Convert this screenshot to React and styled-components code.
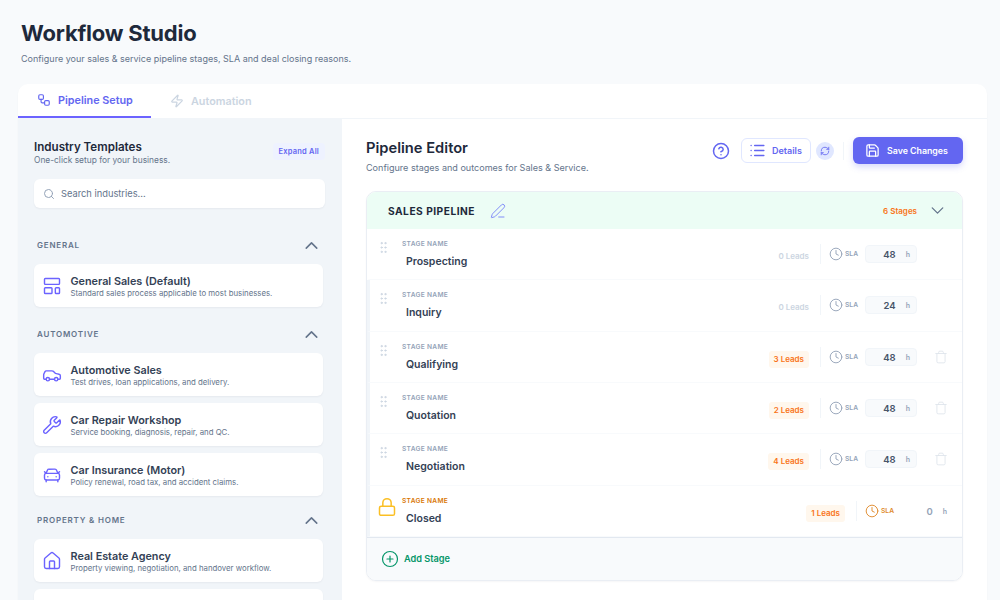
import React from "react"
import styled, { createGlobalStyle } from "styled-components"
import {
  Workflow, Zap, Search, ChevronUp, ChevronDown, LayoutTemplate, Car, Wrench, CarFront, House,
  CircleHelp, List, RefreshCw, Save, PenLine, GripVertical, Clock, Trash, Lock, CirclePlus,
} from "lucide-react"

const GlobalStyle = createGlobalStyle`
  html, body { margin: 0; height: 600px; overflow: hidden; background: #f8fafc; }
  body { font-family: Inter, "Liberation Sans", sans-serif; color: #1e293b; }
  * { box-sizing: border-box; }
`

const Page = styled.div`
  height: 600px;
  overflow: hidden;
  padding: 20px 13px 0 18px;
`
const PageHead = styled.header`
  padding-left: 3px;
  height: 64px;
`
const PageTitle = styled.h1`
  margin: 0;
  font-size: 22px;
  line-height: 26px;
  font-weight: 700;
  letter-spacing: -0.2px;
  color: #1e293b;
`
const PageSub = styled.p`
  margin: 6px 0 0;
  font-size: 9px;
  line-height: 14px;
  color: #64748b;
`
const Card = styled.main`
  background: #fff;
  border-radius: 10px 10px 0 0;
  height: 560px;
  display: flex;
  flex-direction: column;
  box-shadow: 0 1px 2px rgba(15, 23, 42, 0.03);
`
const Tabs = styled.nav`
  display: flex;
  height: 35px;
  flex: none;
  border-bottom: 1px solid #f1f5f9;
`
const Tab = styled.div`
  width: ${p => p.$w}px;
  display: flex;
  align-items: center;
  gap: 7px;
  padding-left: 19px;
  font-size: 10.8px;
  font-weight: 600;
  color: ${p => (p.$active ? "#6366f1" : "#cbd5e1")};
  border-bottom: ${p => (p.$active ? "2px solid #6c63ff" : "none")};
`
const Body = styled.div`
  flex: 1;
  display: flex;
  min-height: 0;
`
const Side = styled.aside`
  width: 324px;
  flex: none;
  background: #f1f5f9;
  padding: 21px 17px 0 16px;
  overflow: hidden;
`
const SideHead = styled.div`
  display: flex;
  justify-content: space-between;
  align-items: flex-start;
`
const SideTitle = styled.h2`
  margin: 0;
  font-size: 11.6px;
  line-height: 14px;
  font-weight: 600;
  color: #1e293b;
`
const SideSub = styled.p`
  margin: 0;
  font-size: 8.4px;
  line-height: 12px;
  color: #64748b;
`
const Expand = styled.span`
  margin-top: 3px;
  background: #eef2ff;
  color: #6366f1;
  font-size: 7.5px;
  font-weight: 600;
  letter-spacing: 0.2px;
  padding: 4px 6px;
  border-radius: 4px;
  line-height: 9px;
`
const SearchBox = styled.div`
  margin-top: 13px;
  height: 29px;
  background: #fff;
  border-radius: 6px;
  display: flex;
  align-items: center;
  gap: 6px;
  padding-left: 9px;
  font-size: 9.3px;
  color: #64748b;
  box-shadow: 0 1px 2px rgba(15, 23, 42, 0.05);
`
const Group = styled.section`
  margin-top: ${p => p.$gap}px;
  padding-right: 2.5px;
`
const GroupHead = styled.div`
  display: flex;
  justify-content: space-between;
  align-items: center;
  height: 14px;
  padding: 0 1px 0 3px;
  margin-bottom: 12px;
  font-size: 8px;
  font-weight: 600;
  letter-spacing: 0.8px;
  color: #64748b;
`
const TemplateList = styled.div`
  display: flex;
  flex-direction: column;
  gap: 7px;
`
const Template = styled.div`
  height: 43px;
  background: #fff;
  border-radius: 6px;
  display: flex;
  align-items: center;
  gap: 8.5px;
  padding-left: 8px;
  box-shadow: 0 1px 2px rgba(15, 23, 42, 0.05);
  color: #6c63ff;
`
const TemplateText = styled.div`
  padding-top: 2px;
`
const TemplateName = styled.div`
  font-size: 10.8px;
  line-height: 13px;
  font-weight: 600;
  color: #334155;
`
const TemplateDesc = styled.div`
  font-size: 7.8px;
  line-height: 11px;
  color: #64748b;
`
const Editor = styled.div`
  flex: 1;
  padding: 18px 24px 0 24px;
`
const EditorHead = styled.div`
  display: flex;
  justify-content: space-between;
  align-items: flex-start;
  height: 54px;
`
const EditorTitle = styled.h2`
  margin: 0;
  font-size: 14.7px;
  line-height: 22px;
  font-weight: 600;
  color: #1e293b;
`
const EditorSub = styled.p`
  margin: 2px 0 0;
  font-size: 9.05px;
  line-height: 14px;
  color: #64748b;
`
const Actions = styled.div`
  display: flex;
  align-items: center;
  height: 27px;
  color: #6366f1;
`
const DetailsBtn = styled.div`
  margin-left: 11px;
  width: 70px;
  height: 25px;
  display: flex;
  align-items: center;
  gap: 6px;
  padding-left: 7px;
  border: 1px solid #e0e7ff;
  border-radius: 6px;
  font-size: 9px;
  font-weight: 600;
  color: #6366f1;
`
const RoundBtn = styled.div`
  margin-left: 5px;
  width: 18px;
  height: 18px;
  border-radius: 50%;
  background: #e0e7ff;
  display: flex;
  align-items: center;
  justify-content: center;
`
const VRule = styled.div`
  width: 1px;
  height: 18px;
  background: #f1f5f9;
  margin: 0 9px;
`
const SaveBtn = styled.div`
  width: 110px;
  height: 27px;
  background: #6366f1;
  border-radius: 6px;
  color: #fff;
  display: flex;
  align-items: center;
  gap: 7px;
  padding-left: 12px;
  font-size: 8.8px;
  font-weight: 600;
  box-shadow: 0 3px 6px rgba(99, 102, 241, 0.25);
`
const Pipeline = styled.section`
  border: 1px solid #eaeef4;
  border-radius: 10px;
  overflow: hidden;
  box-shadow: 0 1px 2px rgba(15, 23, 42, 0.04);
`
const PipelineHead = styled.div`
  height: 37px;
  background: #ecfdf5;
  display: flex;
  align-items: center;
  padding: 0 14px 0 21px;
`
const PipelineName = styled.span`
  font-size: 10.2px;
  font-weight: 700;
  letter-spacing: 0.5px;
  color: #1e293b;
  margin-right: 15px;
`
const StageCount = styled.span`
  margin-left: auto;
  margin-right: 10px;
  font-size: 8px;
  font-weight: 600;
  color: #f97316;
`
const Stage = styled.div`
  height: ${p => p.$h}px;
  display: flex;
  align-items: flex-start;
  border-bottom: 1px solid #f8fafc;
  border-left: ${p => (p.$edge ? "3px solid #f1f5f9" : "3px solid transparent")};
  padding-right: ${p => (p.$locked ? 9 : 14)}px;
`
const Handle = styled.div`
  width: 32px;
  flex: none;
  padding: 10px 0 0 6px;
  color: #cbd5e1;
`
const LockSlot = styled.div`
  width: 32px;
  flex: none;
  padding: 11px 0 0 6.5px;
  color: #fbbf24;
`
const StageText = styled.div`
  flex: 1;
  padding-top: 11px;
`
const FieldLabel = styled.div`
  font-size: 6.6px;
  line-height: 8px;
  font-weight: 600;
  letter-spacing: 0.3px;
  color: ${p => (p.$locked ? "#d97706" : "#94a3b8")};
`
const StageName = styled.div`
  margin: 7px 0 0 4px;
  font-size: 10.5px;
  line-height: 14px;
  font-weight: 600;
  color: #334155;
`
const StageRight = styled.div`
  display: flex;
  align-items: center;
  height: 18px;
  margin-top: 16px;
`
const Leads = styled.span`
  font-size: 8px;
  font-weight: 600;
  line-height: 10px;
  border-radius: 3px;
  margin-top: 4px;
  color: ${p => (p.$hot ? "#f97316" : "#cbd5e1")};
  background: ${p => (p.$hot ? "#fff7ed" : "transparent")};
  padding: ${p => (p.$hot ? "3.5px 5px" : "0")};
`
const Divider = styled.div`
  width: 1px;
  height: 20px;
  background: #f1f5f9;
  margin: 0 8px 0 11px;
`
const SlaLabel = styled.span`
  display: flex;
  align-items: center;
  gap: 2px;
  font-size: 6.7px;
  font-weight: 600;
  color: ${p => (p.$locked ? "#e08a2c" : "#94a3b8")};
  margin-right: 7px;
`
const SlaInput = styled.div`
  width: 52px;
  height: 18px;
  border-radius: 4px;
  background: ${p => (p.$locked ? "transparent" : "#f8fafc")};
  border: 1px solid ${p => (p.$locked ? "transparent" : "#f1f5f9")};
  display: flex;
  align-items: center;
  justify-content: flex-end;
  gap: 10px;
  padding-right: ${p => (p.$locked ? 5 : 6)}px;
  font-size: 9.5px;
  font-weight: 600;
  color: ${p => (p.$locked ? "#94a3b8" : "#475569")};
`
const Unit = styled.span`
  font-size: 7px;
  color: #94a3b8;
`
const TrashSlot = styled.div`
  width: 14px;
  margin-left: 17px;
  color: #dfe5ec;
  display: flex;
`
const AddRow = styled.div`
  height: 43px;
  background: #f8fafc;
  display: flex;
  align-items: center;
  gap: 5px;
  padding: 0 0 1px 14px;
  border-top: 1px solid #e2e8f0;
  font-size: 9.2px;
  font-weight: 600;
  color: #059669;
`

const groups = [
  { name: "GENERAL", gap: 30, items: [
    { icon: LayoutTemplate, name: "General Sales (Default)", desc: "Standard sales process applicable to most businesses." },
  ] },
  { name: "AUTOMOTIVE", gap: 20, items: [
    { icon: Car, name: "Automotive Sales", desc: "Test drives, loan applications, and delivery." },
    { icon: Wrench, name: "Car Repair Workshop", desc: "Service booking, diagnosis, repair, and QC." },
    { icon: CarFront, name: "Car Insurance (Motor)", desc: "Policy renewal, road tax, and accident claims." },
  ] },
  { name: "PROPERTY & HOME", gap: 17, items: [
    { icon: House, name: "Real Estate Agency", desc: "Property viewing, negotiation, and handover workflow." },
    { name: "next" },
  ] },
]

const stages = [
  { name: "Prospecting", leads: 0, sla: 48, h: 51 },
  { name: "Inquiry", leads: 0, sla: 24, h: 52, edge: true },
  { name: "Qualifying", leads: 3, sla: 48, h: 51, edge: true, trash: true },
  { name: "Quotation", leads: 2, sla: 48, h: 51, edge: true, trash: true },
  { name: "Negotiation", leads: 4, sla: 48, h: 52, edge: true, trash: true },
  { name: "Closed", leads: 1, sla: 0, h: 51, edge: true, locked: true },
]

function StageRow({ stage }) {
  const { locked } = stage
  return (
    <Stage $h={stage.h} $edge={stage.edge} $locked={locked}>
      {locked ? (
        <LockSlot><Lock size={20} strokeWidth={1.8} /></LockSlot>
      ) : (
        <Handle><GripVertical size={15} strokeWidth={1.6} /></Handle>
      )}
      <StageText>
        <FieldLabel $locked={locked}>STAGE NAME</FieldLabel>
        <StageName>{stage.name}</StageName>
      </StageText>
      <StageRight>
        <Leads $hot={stage.leads > 0}>{stage.leads} Leads</Leads>
        <Divider />
        <SlaLabel $locked={locked}><Clock size={14} strokeWidth={1.6} />SLA</SlaLabel>
        <SlaInput $locked={locked}>{stage.sla}<Unit>h</Unit></SlaInput>
        {!locked && <TrashSlot>{stage.trash && <Trash size={14} strokeWidth={1.5} />}</TrashSlot>}
      </StageRight>
    </Stage>
  )
}

export default function App() {
  return (
    <Page>
      <GlobalStyle />
      <PageHead>
        <PageTitle>Workflow Studio</PageTitle>
        <PageSub>Configure your sales &amp; service pipeline stages, SLA and deal closing reasons.</PageSub>
      </PageHead>
      <Card>
        <Tabs>
          <Tab $active $w={133}><Workflow size={14} />Pipeline Setup</Tab>
          <Tab $w={120}><Zap size={14} />Automation</Tab>
        </Tabs>
        <Body>
          <Side>
            <SideHead>
              <div>
                <SideTitle>Industry Templates</SideTitle>
                <SideSub>One-click setup for your business.</SideSub>
              </div>
              <Expand>Expand All</Expand>
            </SideHead>
            <SearchBox><Search size={12} color="#94a3b8" />Search industries...</SearchBox>
            {groups.map(group => (
              <Group key={group.name} $gap={group.gap}>
                <GroupHead>{group.name}<ChevronUp size={21} strokeWidth={1.8} color="#64748b" /></GroupHead>
                <TemplateList>
                  {group.items.map(item => (
                    <Template key={item.name}>
                      {item.icon && <item.icon size={20} strokeWidth={1.7} />}
                      {item.desc && (
                        <TemplateText>
                          <TemplateName>{item.name}</TemplateName>
                          <TemplateDesc>{item.desc}</TemplateDesc>
                        </TemplateText>
                      )}
                    </Template>
                  ))}
                </TemplateList>
              </Group>
            ))}
          </Side>
          <Editor>
            <EditorHead>
              <div>
                <EditorTitle>Pipeline Editor</EditorTitle>
                <EditorSub>Configure stages and outcomes for Sales &amp; Service.</EditorSub>
              </div>
              <Actions>
                <CircleHelp size={18} />
                <DetailsBtn><List size={17} />Details</DetailsBtn>
                <RoundBtn><RefreshCw size={10} /></RoundBtn>
                <VRule />
                <SaveBtn><Save size={15} />Save Changes</SaveBtn>
              </Actions>
            </EditorHead>
            <Pipeline>
              <PipelineHead>
                <PipelineName>SALES PIPELINE</PipelineName>
                <PenLine size={16} color="#818cf8" strokeWidth={1.5} />
                <StageCount>6 Stages</StageCount>
                <ChevronDown size={21} strokeWidth={1.5} color="#64748b" />
              </PipelineHead>
              {stages.map(stage => <StageRow key={stage.name} stage={stage} />)}
              <AddRow><CirclePlus size={18} strokeWidth={1.6} />Add Stage</AddRow>
            </Pipeline>
          </Editor>
        </Body>
      </Card>
    </Page>
  )
}
